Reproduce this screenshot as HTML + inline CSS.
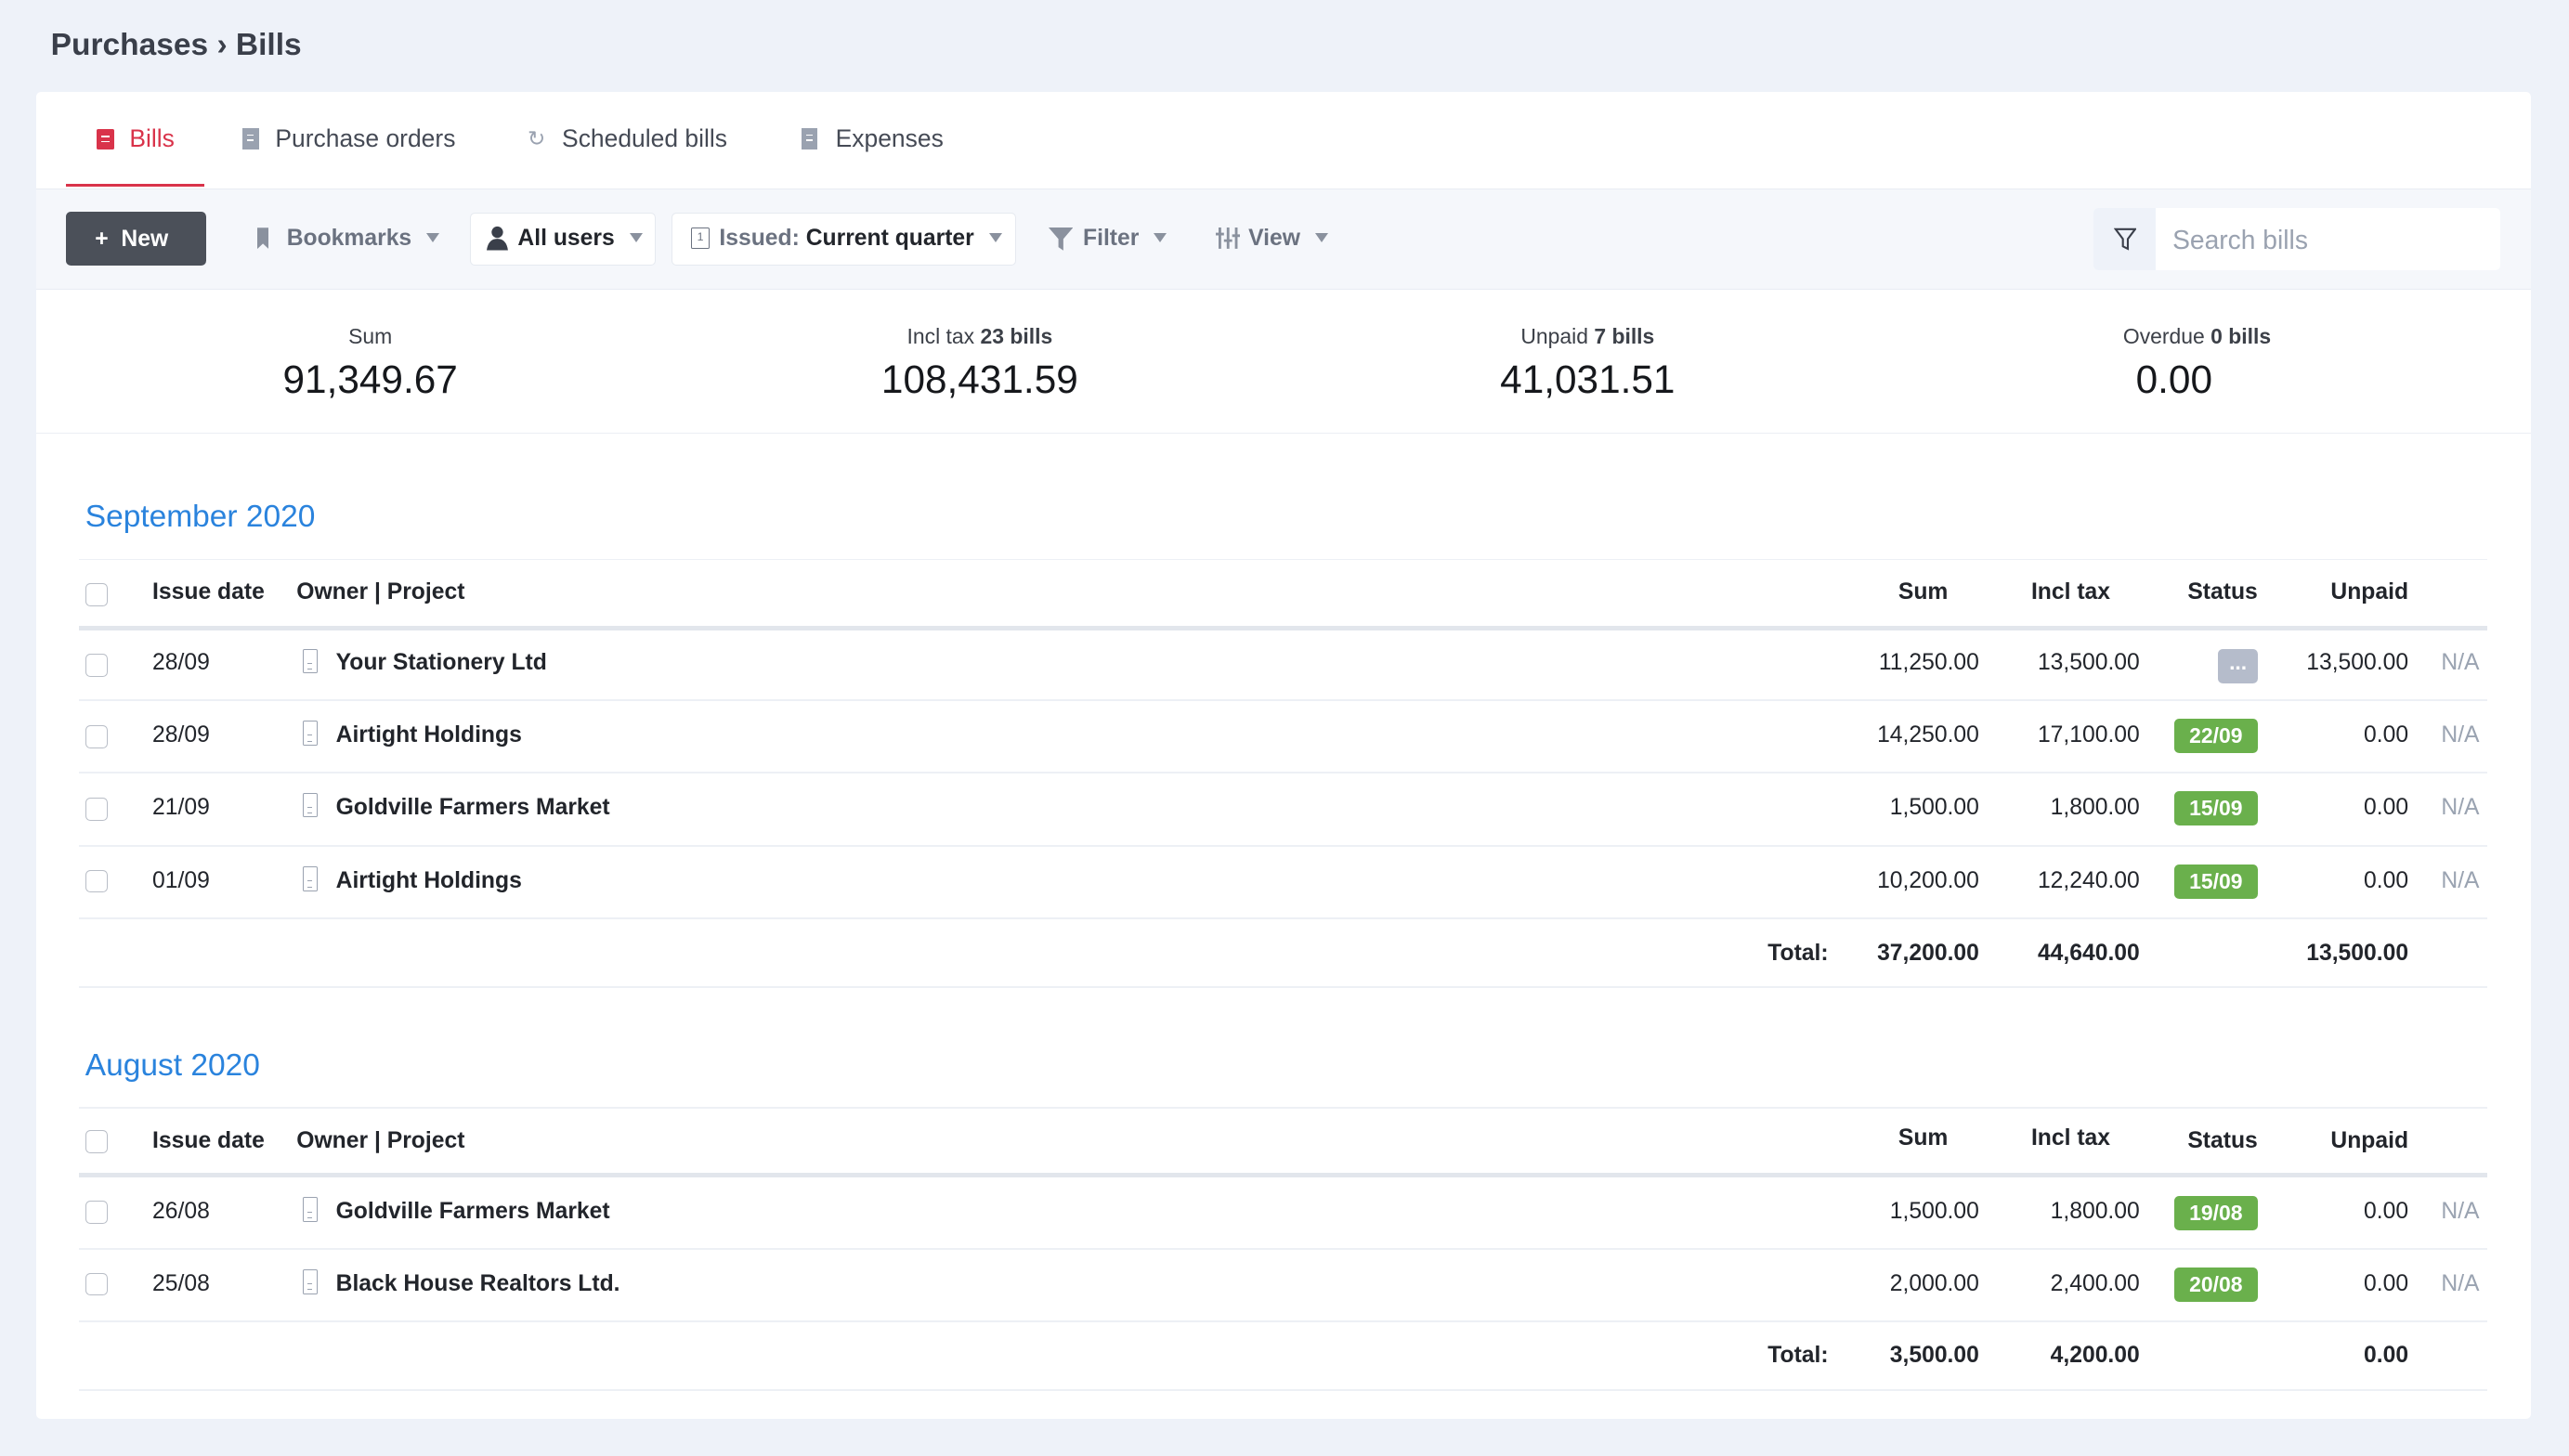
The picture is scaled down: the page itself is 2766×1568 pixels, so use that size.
<!DOCTYPE html>
<html><head><meta charset="utf-8">
<style>
*{box-sizing:border-box;margin:0;padding:0}
html,body{width:2766px;height:1568px;overflow:hidden;background:#eef2f9}
#r{zoom:1.7640;width:1568px;height:889px;position:relative;font-family:"Liberation Sans",sans-serif;color:#22252b;font-size:14px}
.a{position:absolute;white-space:nowrap}
.card{position:absolute;left:22px;top:56px;width:1523px;height:810px;background:#fff;border-radius:3px}
.tab{position:absolute;top:76px;font-size:15px;color:#454a55}
.tb{position:absolute;top:115px;left:22px;width:1523px;height:62px;background:#f5f7fb;border-top:1px solid #e8ecf3;border-bottom:1px solid #e8ecf3}
.btn{position:absolute;top:138px;font-size:14px;color:#6b7280;font-weight:bold}
.box{position:absolute;top:130px;height:32px;background:#fff;border:1px solid #e6eaf0;border-radius:3px}
.caret{display:inline-block;width:0;height:0;border-left:4px solid transparent;border-right:4px solid transparent;border-top:6px solid #8a919e;margin-left:9px;vertical-align:2px}
.lbl{position:absolute;top:198px;font-size:13px;color:#3c4048;transform:translateX(-50%)}
.num{position:absolute;top:218px;font-size:24px;color:#16181c;transform:translateX(-50%)}
.h{position:absolute;left:52px;font-size:19px;color:#2a83dd}
.ln{position:absolute;left:48px;width:1470px;height:1px;background:#edf0f5}
.tk{position:absolute;left:48px;width:1470px;height:3px;background:#e2e6ec}
.cb{position:absolute;left:52px;width:14px;height:14px;border:1px solid #b9bec7;border-radius:3px;background:#fff}
.t{position:absolute;font-size:14px;margin-top:1px}
.b{font-weight:bold}
.r{text-align:right}
.badge{position:absolute;left:1327px;width:51px;height:21px;border-radius:3px;background:#6ab04c;color:#fff;font-weight:bold;font-size:13px;text-align:center;line-height:21px;margin-top:1px}
.na{position:absolute;left:1490px;color:#9aa3b1;font-size:14px;margin-top:1px}
.ic{position:absolute;left:185px;width:9px;height:15px;border:1px solid #9aa2b0;border-radius:1px}
.ic:after{content:"";position:absolute;left:2px;top:8px;width:3px;height:3px;border-top:1px solid #9aa2b0;border-bottom:1px solid #9aa2b0}
</style></head><body><div id="r">
<div class="a" style="left:31px;top:17px;font-size:19px;font-weight:bold;color:#3a3f4a">Purchases › Bills</div>
<div class="card"></div>
<div class="a" style="left:59px;top:79px;width:11px;height:12px;background:#d9334a;border-radius:1px"><div style="position:absolute;left:3px;top:4px;width:5px;height:1px;background:#fff"></div><div style="position:absolute;left:3px;top:7px;width:5px;height:1px;background:#fff"></div></div>
<div class="tab" style="left:79px;color:#d9334a">Bills</div>
<div class="a" style="left:40px;top:112px;width:85px;height:2px;background:#d9334a"></div>
<div class="a" style="left:148px;top:78px;width:10px;height:13px;background:#9aa2b0"><div style="position:absolute;left:3px;top:4px;width:4px;height:1px;background:#fff"></div><div style="position:absolute;left:3px;top:7px;width:4px;height:1px;background:#fff"></div></div>
<div class="tab" style="left:168px">Purchase orders</div>
<div class="tab" style="left:322px;color:#9aa2b0;font-size:13px;top:77px">↻</div>
<div class="tab" style="left:343px">Scheduled bills</div>
<div class="a" style="left:489px;top:78px;width:10px;height:13px;background:#9aa2b0"><div style="position:absolute;left:3px;top:4px;width:4px;height:1px;background:#fff"></div><div style="position:absolute;left:3px;top:7px;width:4px;height:1px;background:#fff"></div></div>
<div class="tab" style="left:510px">Expenses</div>
<div class="tb"></div>
<div class="a" style="left:40px;top:129px;width:86px;height:33px;background:#4b5059;border-radius:3px;color:#fff;font-weight:bold;font-size:14px;line-height:34px;padding-left:18px">+&nbsp; New</div>
<div class="a" style="left:157px;top:139px;width:7px;height:13px;background:#8a919e;clip-path:polygon(0 0,100% 0,100% 100%,50% 75%,0 100%)"></div>
<div class="btn" style="left:175px">Bookmarks<span class="caret"></span></div>
<div class="box" style="left:287px;width:113px"></div>
<svg class="a" style="left:297px;top:138px" width="13" height="15" viewBox="0 0 13 15"><circle cx="6.5" cy="4" r="3.5" fill="#3a3f4a"/><path d="M0 15 Q1 8 6.5 8 Q12 8 13 15Z" fill="#3a3f4a"/></svg>
<div class="btn" style="left:316px;color:#22252b">All users<span class="caret"></span></div>
<div class="box" style="left:410px;width:210px"></div>
<div class="a" style="left:422px;top:139px;width:11px;height:13px;border:1px solid #6b7280;border-radius:1px;font-size:7px;text-align:center;line-height:11px;color:#6b7280">1</div>
<div class="btn" style="left:439px"><span style="color:#6b7280">Issued:</span> <span style="color:#22252b">Current quarter</span><span class="caret"></span></div>
<svg class="a" style="left:640px;top:139px" width="15" height="14" viewBox="0 0 15 14"><path d="M0 0H15L9 7V14L6 12V7Z" fill="#8a919e"/></svg>
<div class="btn" style="left:661px">Filter<span class="caret"></span></div>
<svg class="a" style="left:742px;top:139px" width="15" height="13" viewBox="0 0 15 13" stroke="#8a919e" stroke-width="1.6"><path d="M2.5 0V13M7.5 0V13M12.5 0V13M0 4H5M5 8H10M10 5H15"/></svg>
<div class="btn" style="left:762px">View<span class="caret"></span></div>
<div class="a" style="left:1278px;top:127px;width:248px;height:38px;background:#fff;border-radius:3px"></div>
<div class="a" style="left:1278px;top:127px;width:38px;height:38px;background:#eef2f9;border-radius:3px 0 0 3px"></div>
<svg class="a" style="left:1290px;top:139px" width="14" height="14" viewBox="0 0 14 14" fill="none" stroke="#3a3f4a" stroke-width="1.2"><path d="M1 1H13L8.5 7V13L5.5 11.5V7Z"/></svg>
<div class="a" style="left:1326px;top:137px;font-size:16px;color:#9aa2b0">Search bills</div>
<div class="lbl" style="left:226px">Sum</div><div class="num" style="left:226px">91,349.67</div>
<div class="lbl" style="left:598px">Incl tax <b>23 bills</b></div><div class="num" style="left:598px">108,431.59</div>
<div class="lbl" style="left:969px">Unpaid <b>7 bills</b></div><div class="num" style="left:969px">41,031.51</div>
<div class="lbl" style="left:1341px">Overdue <b>0 bills</b></div><div class="num" style="left:1327px">0.00</div>
<div class="a" style="left:22px;top:264px;width:1523px;height:1px;background:#eceff4"></div>

<div class="h" style="top:305px">September 2020</div>
<div class="ln" style="top:341px"></div>
<div class="cb" style="top:356px"></div>
<div class="t b" style="left:93px;top:353px">Issue date</div>
<div class="t b" style="left:181px;top:353px">Owner | Project</div>
<div class="t b r" style="left:1100px;width:89px;top:353px">Sum</div>
<div class="t b r" style="left:1200px;width:88px;top:353px">Incl tax</div>
<div class="t b r" style="left:1300px;width:78px;top:353px">Status</div>
<div class="t b r" style="left:1380px;width:90px;top:353px">Unpaid</div>
<div class="tk" style="top:382px"></div>

<div class="cb" style="top:399px"></div><div class="t" style="left:93px;top:396px">28/09</div><div class="ic" style="top:396px"></div><div class="t b" style="left:205px;top:396px">Your Stationery Ltd</div>
<div class="t r" style="left:1100px;width:108px;top:396px">11,250.00</div><div class="t r" style="left:1200px;width:106px;top:396px">13,500.00</div>
<div class="badge" style="left:1354px;width:24px;background:#b5bccb;top:395px;line-height:17px">...</div>
<div class="t r" style="left:1380px;width:90px;top:396px">13,500.00</div><div class="na" style="top:396px">N/A</div>
<div class="ln" style="top:427px"></div>

<div class="cb" style="top:443px"></div><div class="t" style="left:93px;top:440px">28/09</div><div class="ic" style="top:440px"></div><div class="t b" style="left:205px;top:440px">Airtight Holdings</div>
<div class="t r" style="left:1100px;width:108px;top:440px">14,250.00</div><div class="t r" style="left:1200px;width:106px;top:440px">17,100.00</div>
<div class="badge" style="top:438px">22/09</div>
<div class="t r" style="left:1380px;width:90px;top:440px">0.00</div><div class="na" style="top:440px">N/A</div>
<div class="ln" style="top:471px"></div>

<div class="cb" style="top:487px"></div><div class="t" style="left:93px;top:484px">21/09</div><div class="ic" style="top:484px"></div><div class="t b" style="left:205px;top:484px">Goldville Farmers Market</div>
<div class="t r" style="left:1100px;width:108px;top:484px">1,500.00</div><div class="t r" style="left:1200px;width:106px;top:484px">1,800.00</div>
<div class="badge" style="top:482px">15/09</div>
<div class="t r" style="left:1380px;width:90px;top:484px">0.00</div><div class="na" style="top:484px">N/A</div>
<div class="ln" style="top:516px"></div>

<div class="cb" style="top:531px"></div><div class="t" style="left:93px;top:529px">01/09</div><div class="ic" style="top:529px"></div><div class="t b" style="left:205px;top:529px">Airtight Holdings</div>
<div class="t r" style="left:1100px;width:108px;top:529px">10,200.00</div><div class="t r" style="left:1200px;width:106px;top:529px">12,240.00</div>
<div class="badge" style="top:527px">15/09</div>
<div class="t r" style="left:1380px;width:90px;top:529px">0.00</div><div class="na" style="top:529px">N/A</div>
<div class="ln" style="top:560px"></div>

<div class="t b r" style="left:1000px;width:116px;top:573px">Total:</div>
<div class="t b r" style="left:1100px;width:108px;top:573px">37,200.00</div><div class="t b r" style="left:1200px;width:106px;top:573px">44,640.00</div>
<div class="t b r" style="left:1380px;width:90px;top:573px">13,500.00</div>
<div class="ln" style="top:602px"></div>

<div class="h" style="top:640px">August 2020</div>
<div class="ln" style="top:676px"></div>
<div class="cb" style="top:690px"></div>
<div class="t b" style="left:93px;top:688px">Issue date</div>
<div class="t b" style="left:181px;top:688px">Owner | Project</div>
<div class="t b r" style="left:1100px;width:89px;top:686px">Sum</div>
<div class="t b r" style="left:1200px;width:88px;top:686px">Incl tax</div>
<div class="t b r" style="left:1300px;width:78px;top:688px">Status</div>
<div class="t b r" style="left:1380px;width:90px;top:688px">Unpaid</div>
<div class="tk" style="top:716px"></div>

<div class="cb" style="top:733px"></div><div class="t" style="left:93px;top:731px">26/08</div><div class="ic" style="top:731px"></div><div class="t b" style="left:205px;top:731px">Goldville Farmers Market</div>
<div class="t r" style="left:1100px;width:108px;top:731px">1,500.00</div><div class="t r" style="left:1200px;width:106px;top:731px">1,800.00</div>
<div class="badge" style="top:729px">19/08</div>
<div class="t r" style="left:1380px;width:90px;top:731px">0.00</div><div class="na" style="top:731px">N/A</div>
<div class="ln" style="top:762px"></div>

<div class="cb" style="top:777px"></div><div class="t" style="left:93px;top:775px">25/08</div><div class="ic" style="top:775px"></div><div class="t b" style="left:205px;top:775px">Black House Realtors Ltd.</div>
<div class="t r" style="left:1100px;width:108px;top:775px">2,000.00</div><div class="t r" style="left:1200px;width:106px;top:775px">2,400.00</div>
<div class="badge" style="top:773px">20/08</div>
<div class="t r" style="left:1380px;width:90px;top:775px">0.00</div><div class="na" style="top:775px">N/A</div>
<div class="ln" style="top:806px"></div>

<div class="t b r" style="left:1000px;width:116px;top:819px">Total:</div>
<div class="t b r" style="left:1100px;width:108px;top:819px">3,500.00</div><div class="t b r" style="left:1200px;width:106px;top:819px">4,200.00</div>
<div class="t b r" style="left:1380px;width:90px;top:819px">0.00</div>
<div class="ln" style="top:848px"></div>
</div></body></html>
